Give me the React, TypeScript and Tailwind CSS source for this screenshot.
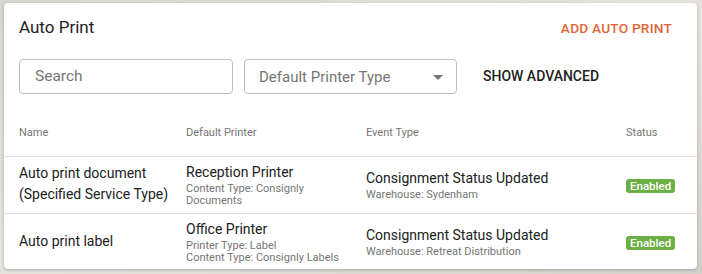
import React from "react";

type Row = {
  name: string[];
  printer: string;
  printerMeta: string[];
  event: string;
  eventMeta: string;
};

const rows: Row[] = [
  {
    name: ["Auto print document", "(Specified Service Type)"],
    printer: "Reception Printer",
    printerMeta: ["Content Type: Consignly", "Documents"],
    event: "Consignment Status Updated",
    eventMeta: "Warehouse: Sydenham"
  },
  {
    name: ["Auto print label"],
    printer: "Office Printer",
    printerMeta: ["Printer Type: Label", "Content Type: Consignly Labels"],
    event: "Consignment Status Updated",
    eventMeta: "Warehouse: Retreat Distribution"
  }
];

export default function App() {
  return (
    <div
      className="h-[274px] w-[702px] bg-gradient-to-br from-[#d9d6d2] via-[#e6e3df] to-[#d4d1cd] pl-[4px] pr-[5px] pt-[3px]"
      style={{ fontFamily: "Roboto, 'Liberation Sans', sans-serif" }}
    >
      <div className="h-[266px] overflow-hidden rounded-[4px] bg-white shadow-[0_1px_3px_rgba(0,0,0,0.25)]">
        <div className="flex h-[48px] items-center justify-between pl-[15px] pr-[25px] pt-[2px]">
          <h1 className="text-[17px] text-[#212121]">Auto Print</h1>
          <button className="text-[13.7px] font-medium tracking-[0.2px] text-[#e0663a]" type="button">
            ADD AUTO PRINT
          </button>
        </div>
        <div className="mt-[8px] flex items-center pl-[15px]">
          <div className="flex h-[35px] w-[214px] items-center rounded-[4px] border border-[#bdbdbd] px-[15px] pt-[1px] text-[15.5px] text-[#757575]">
            Search
          </div>
          <div className="ml-[11px] flex h-[35px] w-[213px] items-center justify-between rounded-[4px] border border-[#bdbdbd] pl-[14px] pr-[13px] pt-[1px] text-[15px] text-[#757575]">
            <span>Default Printer Type</span>
            <svg width="10" height="5" viewBox="0 0 10 5">
              <path d="M0 0 L10 0 L5 5 Z" fill="#757575" />
            </svg>
          </div>
          <button className="ml-[26px] text-[14px] font-medium text-[#212121]" type="button">
            SHOW ADVANCED
          </button>
        </div>
        <div className="mt-[19px] grid h-[43px] grid-cols-[167px_180px_260px_1fr] items-center pb-[2px] pl-[15px] text-[11px] text-[#757575]">
          <span>Name</span>
          <span>Default Printer</span>
          <span>Event Type</span>
          <span>Status</span>
        </div>
        {rows.map((row, i) => (
          <div
            key={i}
            className="grid h-[57px] grid-cols-[167px_180px_260px_1fr] items-center border-t border-[#e0e0e0] pl-[15px] text-[#212121]"
          >
            <div className="pb-[2px] text-[14px] leading-[21px]">
              {row.name.map((n) => (
                <div key={n}>{n}</div>
              ))}
            </div>
            <div className="pb-[1px]">
              <div className="text-[14px] leading-[20px]">{row.printer}</div>
              <div className="mt-[1px]">
                {row.printerMeta.map((m) => (
                  <div key={m} className="text-[11px] leading-[12px] text-[#757575]">
                    {m}
                  </div>
                ))}
              </div>
            </div>
            <div>
              <div className="text-[14px] leading-[20px]">{row.event}</div>
              <div className="text-[11px] leading-[14px] text-[#757575]">{row.eventMeta}</div>
            </div>
            <div>
              <span className="inline-block rounded-[3px] bg-[#6ab045] px-[4px] text-[11.5px] font-medium leading-[14px] text-white">
                Enabled
              </span>
            </div>
          </div>
        ))}
      </div>
    </div>
  );
}
